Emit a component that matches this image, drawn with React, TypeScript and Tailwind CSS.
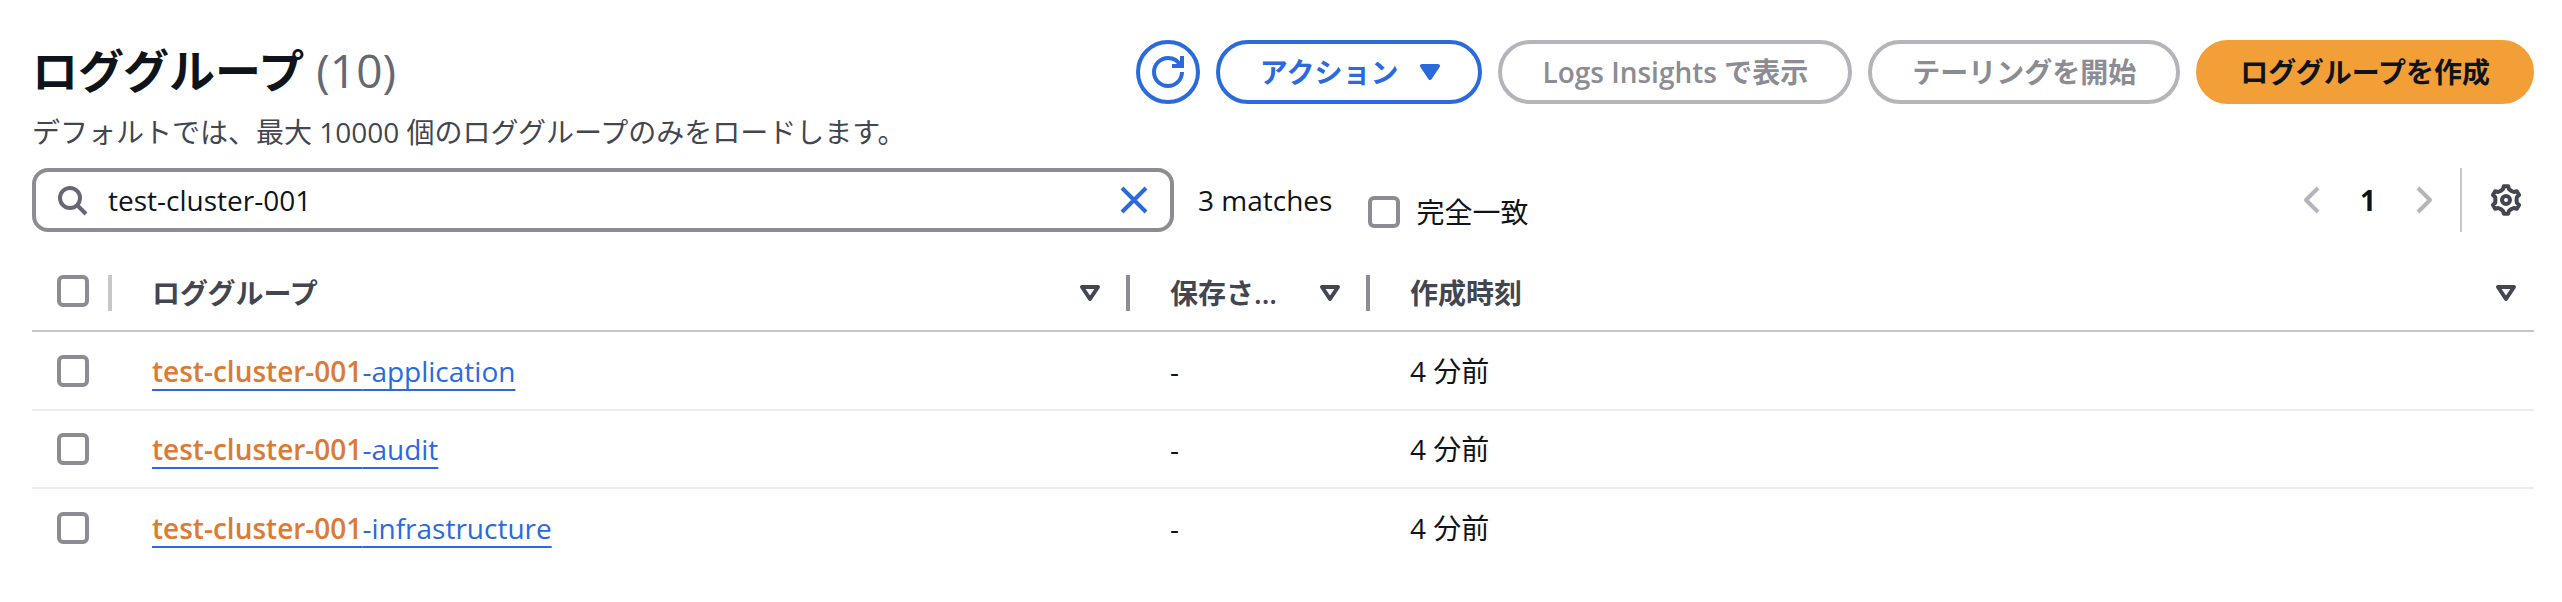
import { useState } from "react";

const logGroups = [
    { id: 1, suffix: "-application", retention: "-", created: "4 分前" },
    { id: 2, suffix: "-audit", retention: "-", created: "4 分前" },
    { id: 3, suffix: "-infrastructure", retention: "-", created: "4 分前" },
];

const buttonBase = "flex h-16 items-center rounded-full border-4 text-[28px] leading-10 font-semibold whitespace-nowrap";
const checkboxStyle = "block size-8 shrink-0 appearance-none rounded-md border-4 border-[#8c8c94] bg-white checked:bg-[#2b6adc]";

// one tooth of the gear, repeated six times around the centre
const tooth = [[-2.3, -4.8], [-1.5, -5.4], [-1.1, -6.9], [1.1, -6.9], [1.5, -5.4], [2.3, -4.8]];
const gearPath = "M" + [0, 1, 2, 3, 4, 5].map((k) => {
    const a = (k * Math.PI) / 3;
    return tooth.map(([x, y]) => (8 + x * Math.cos(a) - y * Math.sin(a)).toFixed(2) + " " + (8 + x * Math.sin(a) + y * Math.cos(a)).toFixed(2)).join("L");
}).join("L") + "Z";

function Icon({ children }: any) {
    return (
        <svg viewBox="0 0 16 16" className="size-8 shrink-0" fill="none" stroke="currentColor" strokeWidth="2" strokeLinejoin="round" aria-hidden="true">
            {children}
        </svg>
    );
}

function HeaderCell({ title, last }: any) {
    return (
        <th className="h-[79px] p-0 pt-1 pl-10 text-left font-semibold text-[#424650]">
            <div className={last ? "flex items-center justify-between pr-3" : "flex items-center gap-5"}>
                <span className="flex-1 whitespace-nowrap">{title}</span>
                <button className="flex" aria-label={title + "で並べ替え"}>
                    <Icon>
                        <path d="M4 5h8l-4 6-4-6Z" />
                    </Icon>
                </button>
                {!last && <span className="h-9 w-1 bg-[#8c8c94]" />}
            </div>
        </th>
    );
}

export default function LogGroups() {
    const [query, setQuery] = useState("test-cluster-001");

    return (
        <div lang="ja" className="bg-white pt-10 pr-7 pb-8 pl-8 font-['Open_Sans','Noto_Sans_CJK_JP',sans-serif] text-[28px] leading-10 text-[#0f141a]">
            <header className="flex items-start justify-between">
                <div>
                    <h1 className="text-[46px] leading-[60px] font-bold">
                        ロググループ <span className="font-medium text-[#656871]">(10)</span>
                    </h1>
                    <p className="mt-3 text-[#424650]">デフォルトでは、最大 10000 個のロググループのみをロードします。</p>
                </div>
                <div className="flex gap-4">
                    <button className="flex size-16 items-center justify-center rounded-full border-4 border-[#2b6adc] text-[#2b6adc]" aria-label="更新">
                        <Icon>
                            <path d="M15 8c0 3.87-3.13 7-7 7s-7-3.13-7-7 3.13-7 7-7c2.79 0 5.2 1.63 6.33 4" />
                            <path d="M10 5h5V0" strokeLinejoin="miter" />
                        </Icon>
                    </button>
                    <button className={buttonBase + " gap-4 border-[#2b6adc] pr-8 pl-10 text-[#2b6adc]"}>
                        アクション
                        <Icon>
                            <path d="M4 5h8l-4 6-4-6Z" fill="currentColor" />
                        </Icon>
                    </button>
                    <button disabled className={buttonBase + " border-[#b4b4bb] px-10 text-[#8c8c94]"}>Logs Insights で表示</button>
                    <button disabled className={buttonBase + " border-[#b4b4bb] px-10 text-[#8c8c94]"}>テーリングを開始</button>
                    <button className={buttonBase + " border-[#f29f38] bg-[#f29f38] px-10"}>ロググループを作成</button>
                </div>
            </header>

            <div className="mt-4 flex h-16">
                <div className="flex h-16 w-full max-w-[1142px] items-center gap-5 rounded-2xl border-4 border-[#8c8c94] px-5">
                    <span className="text-[#656871]">
                        <Icon>
                            <path d="m11 11 4 4" />
                            <circle cx="7" cy="7" r="5" />
                        </Icon>
                    </span>
                    <input
                        type="text"
                        aria-label="ロググループを検索"
                        value={query}
                        onChange={(e) => setQuery(e.target.value)}
                        className="min-w-0 flex-1 outline-none"
                    />
                    <button className="text-[#2b6adc]" aria-label="クリア" onClick={() => setQuery("")}>
                        <Icon>
                            <path d="m2 2 12 12M14 2 2 14" />
                        </Icon>
                    </button>
                </div>
                <span className="ml-6 self-center whitespace-nowrap">3 matches</span>
                <label className="mt-6 ml-9 flex items-center gap-4 whitespace-nowrap">
                    <input type="checkbox" className={checkboxStyle} />
                    完全一致
                </label>
                <nav className="ml-auto flex items-center">
                    <button disabled className="text-[#b4b4bb]" aria-label="前のページ">
                        <Icon>
                            <path d="M11 2 5 8l6 6" />
                        </Icon>
                    </button>
                    <button className="w-20 text-center font-bold">1</button>
                    <button disabled className="text-[#b4b4bb]" aria-label="次のページ">
                        <Icon>
                            <path d="m5 2 6 6-6 6" />
                        </Icon>
                    </button>
                    <span className="mr-7 ml-5 h-16 w-0.5 bg-[#c6c6cd]" />
                    <button className="mr-3 text-[#424650]" aria-label="設定">
                        <Icon>
                            <path d={gearPath} />
                            <circle cx="8" cy="8" r="2" />
                        </Icon>
                    </button>
                </nav>
            </div>

            <table className="mt-5 w-full table-fixed border-collapse">
                <colgroup>
                    <col className="w-20" />
                    <col className="w-[1018px]" />
                    <col className="w-60" />
                    <col />
                </colgroup>
                <thead>
                    <tr className="border-b-2 border-[#c6c6cd]">
                        <th className="p-0 pl-[25px]">
                            <div className="flex items-center justify-between">
                                <input type="checkbox" aria-label="すべて選択" className={checkboxStyle} />
                                <span className="mt-1 h-9 w-1 bg-[#c6c6cd]" />
                            </div>
                        </th>
                        <HeaderCell title="ロググループ" />
                        <HeaderCell title="保存さ..." />
                        <HeaderCell title="作成時刻" last />
                    </tr>
                </thead>
                <tbody>
                    {logGroups.map((group) => (
                        <tr key={group.id} className="h-[78px] border-b-2 border-[#ebebf0] first:h-[79px] last:border-b-0">
                            <td className="p-0 pl-[25px]">
                                <input type="checkbox" aria-label={"test-cluster-001" + group.suffix} className={checkboxStyle} />
                            </td>
                            <td className="p-0 pl-10">
                                <a href="#" className="text-[#2b6adc] underline decoration-2 underline-offset-[7px]">
                                    <span className="font-semibold text-[#dd7a33]">test-cluster-001</span>
                                    {group.suffix}
                                </a>
                            </td>
                            <td className="p-0 pl-10">{group.retention}</td>
                            <td className="p-0 pl-10">{group.created}</td>
                        </tr>
                    ))}
                </tbody>
            </table>
        </div>
    );
}
